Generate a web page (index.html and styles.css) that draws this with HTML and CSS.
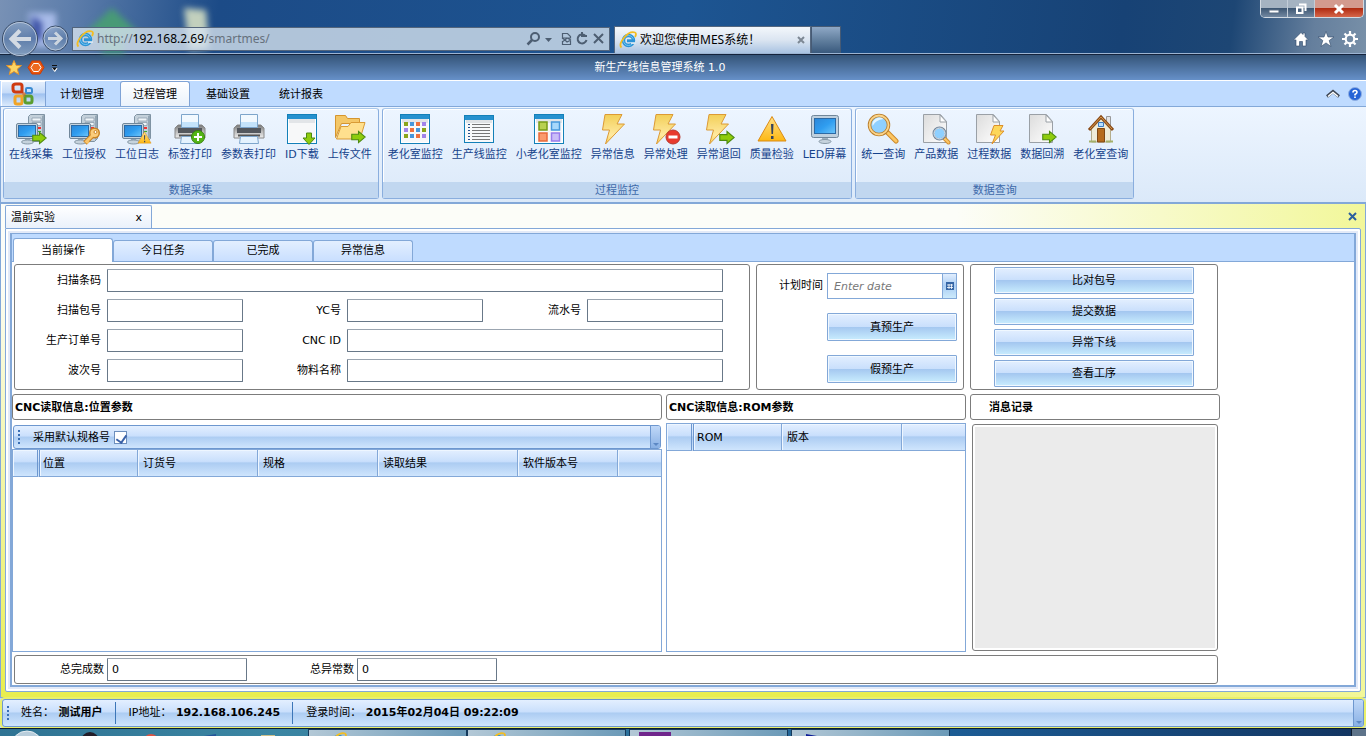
FILE: index.html
```html
<!DOCTYPE html>
<html lang="zh-CN">
  <head>
    <meta charset="UTF-8" />
    <title>欢迎您使用MES系统！</title>
    <link rel="stylesheet" href="styles.css">
  </head>
  <body>
    <!-- Icon sprites -->
    <svg class="sprites" aria-hidden="true">
      <defs>
        <linearGradient id="gScreen" x1="0" y1="0" x2="1" y2="1">
          <stop offset="0" stop-color="#2b86d8" /><stop offset="0.5" stop-color="#2f9df0" /><stop offset="1" stop-color="#6cc6fb" />
        </linearGradient>
        <linearGradient id="gGold" x1="0" y1="0" x2="0" y2="1">
          <stop offset="0" stop-color="#f2cf58" /><stop offset="0.7" stop-color="#ffe9a0" /><stop offset="1" stop-color="#f8cf4c" />
        </linearGradient>
        <linearGradient id="gWarn" x1="0" y1="0" x2="0" y2="1">
          <stop offset="0" stop-color="#ffe08a" /><stop offset="1" stop-color="#fdb813" />
        </linearGradient>
        <linearGradient id="gPaper" x1="0" y1="0" x2="1" y2="1">
          <stop offset="0" stop-color="#dcdcdc" /><stop offset="1" stop-color="#ffffff" />
        </linearGradient>
        <linearGradient id="gPrinter" x1="0" y1="0" x2="0" y2="1">
          <stop offset="0" stop-color="#777" /><stop offset="0.5" stop-color="#bbb" /><stop offset="1" stop-color="#eee" />
        </linearGradient>
        <linearGradient id="gCircle" x1="0" y1="0" x2="0" y2="1">
          <stop offset="0" stop-color="#8ca5c6" /><stop offset="0.5" stop-color="#5b7ba8" /><stop offset="1" stop-color="#8ba6c4" />
        </linearGradient>
      </defs>
      <symbol id="arrowGreen" viewBox="0 0 14 12">
        <path d="M.7 3.500h6.300V.8l6.300 5.200L7 11.200V8.500H.7z" fill="#8fcc0c" stroke="#4d8a10" />
      </symbol>
      <symbol id="pc" viewBox="0 0 32 32">
        <path d="M13.500 3.500l2-2h14v24l-3 3h-13z" fill="#c3d0da" stroke="#7f93a3" />
        <path d="M17 5h9v3h-9zM17 9.500h9v3h-9z" fill="#eef4f8" stroke="#8497a6" stroke-width=".7" />
        <path d="M27 3v24l2-2V2z" fill="#94a6b4" />
        <path d="M23 14h3v2h-3z" fill="#e33" /><path d="M23 18h3v1h-3z" fill="#3a3" />
        <rect x="1.500" y="10.500" width="21" height="15" rx="1.500" fill="#c6d4df" stroke="#71879a" />
        <rect x="3.500" y="12.500" width="17" height="11" fill="url(#gScreen)" stroke="#2c6aa5" />
        <path d="M10 26h5v2h-5z" fill="#95a8b6" /><ellipse cx="12.500" cy="29" rx="6" ry="2" fill="#c6d3dd" stroke="#8799a7" />
      </symbol>
      <symbol id="printer" viewBox="0 0 32 32">
        <path d="M4 12h24l3 3v10H1V15z" fill="url(#gPrinter)" stroke="#888" />
        <path d="M4 15h24v5H4z" fill="#53575d" />
        <path d="M7.500 1.500h17v13h-17z" fill="#f2f9ff" stroke="#7da5cb" />
        <path d="M8 9h16v5H8z" fill="#c4e3fb" />
        <path d="M5 21.500h22v2H5z" fill="#555" />
        <path d="M7.500 23.500h17l1 7h-19z" fill="#e4f2fe" stroke="#7da5cb" />
      </symbol>
      <symbol id="window" viewBox="0 0 32 32">
        <rect x="1.500" y="1.500" width="29" height="29" fill="#fff" stroke="#1380b8" />
        <path d="M2 2h28v4H2z" fill="#2591cf" /><path d="M3 6h26v8H3z" fill="#e2e5e8" /><path d="M3 10h26v19H3z" fill="#f7f8f9" />
      </symbol>
      <symbol id="bolt" viewBox="0 0 32 32">
        <path d="M8 1.500h17l-5 9.500h7.500L8.500 31l4-14H5.500z" fill="url(#gGold)" stroke="#dc9a35" stroke-linejoin="round" />
      </symbol>
      <symbol id="page" viewBox="0 0 32 32">
        <path d="M3.500 1.500h17l6 7v21h-23z" fill="url(#gPaper)" stroke="#9aa0a6" />
        <path d="M20 2v7h6.500z" fill="#fff" stroke="#9aa0a6" />
      </symbol>
      <symbol id="glass" viewBox="0 0 32 32">
        <path d="M20 19l9 9" stroke="#cc8a2c" stroke-width="5" stroke-linecap="round" />
        <path d="M21 20l8 8" stroke="#fcc663" stroke-width="3" stroke-linecap="round" />
        <circle cx="12" cy="12" r="9.500" fill="#8fd0ff" stroke="#b97d2a" stroke-width="3.500" />
        <circle cx="12" cy="12" r="9.500" fill="none" stroke="#fbd48a" stroke-width="1.800" />
        <path d="M5.500 13a7 7 0 0 1 11-7q-8 1-11 7z" fill="#e4f5ff" />
      </symbol>
      <symbol id="glassSmall" viewBox="0 0 19 19">
        <path d="M11.500 11.500l5 5" stroke="#d48f34" stroke-width="4" stroke-linecap="round" />
        <path d="M12.500 12.500l4 4" stroke="#fcc663" stroke-width="2" stroke-linecap="round" />
        <circle cx="7.500" cy="7.500" r="6" fill="#8fd0ff" stroke="#71859a" stroke-width="2" />
        <circle cx="7.500" cy="7.500" r="5.500" fill="none" stroke="#e8eef4" />
      </symbol>
      <symbol id="warn" viewBox="0 0 32 32">
        <path d="M16 3.500L30 28H2z" fill="url(#gWarn)" stroke="#db8b14" stroke-linejoin="round" />
        <path d="M15 11h2.500l-.5 10h-1.500zM15 23h2.500v3H15z" fill="#36435c" />
      </symbol>
      <symbol id="ie" viewBox="0 0 18 18">
        <circle cx="9.500" cy="9.500" r="5" fill="none" stroke="#2b93d6" stroke-width="3.400" />
        <circle cx="9.500" cy="9.500" r="5" fill="none" stroke="#72c6f2" stroke-width="1" />
        <path d="M8 8.300h8v2.900H8z" fill="#2b93d6" /><path d="M12 11.200h5v1.800h-5z" fill="#d6e6f2" />
        <path d="M2.500 16.500C-2 13 9-1 16 1.500c1.500.6 1 3 0 4.500" fill="none" stroke="#f3bd22" stroke-width="1.800" />
      </symbol>
    </svg>

    <!-- Browser frame -->
    <header class="browser">
      <svg class="backdrop" width="260" height="53" viewBox="0 0 260 53" aria-hidden="true">
        <path d="M112 8l30 28H82z" fill="#489a76" /><path d="M102 36h22v18h-22z" fill="#3d9272" />
        <path d="M184 8l22 2 3 38-20 2z" fill="#c2d0bd" /><path d="M28 13h28v34H34z" fill="#a9bce9" />
        <path d="M32 16l10 6v18H32z" fill="#3d52a6" />
      </svg>
      <div class="window-buttons">
        <button aria-label="最小化"><svg width="14" height="12"><path d="M2 7h10v3H2z" fill="#fff" stroke="#566b82" /></svg></button>
        <button aria-label="还原"><svg width="14" height="14"><path d="M5 2.500h6.500V9" fill="none" stroke="#fff" stroke-width="2" /><path d="M3 5.500h5.500v5.500H3z" fill="none" stroke="#fff" stroke-width="2" /></svg></button>
        <button class="close" aria-label="关闭"><svg width="14" height="12"><path d="M3 2l8 8M11 2l-8 8" stroke="#fff" stroke-width="3" /></svg></button>
      </div>
      <nav class="browser-bar">
        <button class="round back" aria-label="后退">
          <svg width="38" height="38" viewBox="0 0 38 38"><circle cx="19" cy="19" r="17.500" fill="url(#gCircle)" fill-opacity=".75" stroke="#394b66" /><circle cx="19" cy="19" r="16.500" fill="none" stroke="#b5c4d8" /><path d="M30 19H11M19 10.500L10.500 19l8.500 8.500" fill="none" stroke="#d3dae3" stroke-width="4" /></svg>
        </button>
        <button class="round" aria-label="前进">
          <svg width="27" height="27" viewBox="0 0 27 27"><circle cx="13.500" cy="13.500" r="12.500" fill="url(#gCircle)" fill-opacity=".75" stroke="#394b66" /><circle cx="13.500" cy="13.500" r="11.500" fill="none" stroke="#b5c4d8" /><path d="M6 13.500h12M13 7.500l6 6-6 6" fill="none" stroke="#ccd5df" stroke-width="3" /></svg>
        </button>
        <div class="address">
          <svg width="18" height="18"><use href="#ie" /></svg>
          <span class="url">http://<b>192.168.2.69</b>/smartmes/</span>
          <svg width="80" height="18" viewBox="0 0 80 18" fill="none" stroke="#4d5e72" stroke-width="2">
            <circle cx="9" cy="7" r="4" /><path d="M6 10l-4.500 4.500" stroke-width="2.500" />
            <path d="M19 8h7l-3.500 4z" fill="#4d5e72" stroke="none" />
            <path d="M36.500 8V3.500h5l3 3V8zM36.500 11v3.500h8V11M36 8l3 2 2-2 4 2M36 12l3-2 2 2 4-2" stroke-width="1.200" />
            <path d="M59 5.500a4.500 4.500 0 1 0 1.500 4.500M56 2v4h5" />
            <path d="M68 4l9 9M77 4l-9 9" />
          </svg>
        </div>
        <div class="browser-tab">
          <svg width="18" height="18"><use href="#ie" /></svg>
          <span>欢迎您使用MES系统！</span>
          <svg width="8" height="8"><path d="M1 1l6 6M7 1L1 7" stroke="#7d8894" stroke-width="2" /></svg>
        </div>
        <button class="new-tab" aria-label="新标签页"></button>
        <svg class="tools" width="66" height="18" viewBox="0 0 66 18" fill="#fff" stroke="#2f4868" stroke-width=".6">
          <path d="M1 9.500L8 2.500l2 2V3h2v3.500l3 3-1 .8-1-.5V16H9.500v-4.500h-3V16H3V9.800l-1 .5z" />
          <path d="M33 1.500l2 5.500h6l-4.800 3.500 1.800 6-5-3.600-5 3.600 1.800-6L25 7h6z" />
          <circle cx="57" cy="9" r="4.300" fill="none" stroke="#fff" stroke-width="2.200" />
          <path d="M57 1v3M57 14v3M49 9h3M62 9h3M51.500 3.500l2 2M60.500 12.500l2 2M62.500 3.500l-2 2M53.500 12.500l-2 2" stroke="#fff" stroke-width="2.200" />
        </svg>
      </nav>
    </header>

    <!-- Application title -->
    <div class="titlebar">
      <svg width="54" height="18" viewBox="0 0 54 18">
        <path d="M8 1.500l2.200 5h5.300l-4.200 3.600 1.500 5.400L8 12.500l-4.800 3 1.500-5.400L.5 6.500h5.300z" fill="#fcd462" stroke="#e2932c" />
        <path d="M26 2h8l4 6.500-4 6.500h-8l-4-6.500z" fill="#e9570f" stroke="#ce3c05" /><path d="M27.500 4.500h5L35 8.500l-2.500 4h-5l-2.500-4z" fill="#ee6a20" stroke="#fff" />
        <path d="M46 6.500h5M46.500 9.500h4.500l-2.200 3z" fill="#fff" stroke="#fff" /><path d="M46 6.500h5" stroke="#111" /><path d="M46 8.500h5l-2.500 3z" fill="#111" />
      </svg>
      <h1>新生产线信息管理系统 1.0</h1>
    </div>

    <nav class="menu">
      <button class="office" aria-label="主菜单">
        <svg width="24" height="24" viewBox="0 0 24 24" fill="none" stroke-width="3">
          <path d="M11 10H5q-3 0-3-3V4q0-2 3-2h4q2 0 2 2z" stroke="#cf3a10" />
          <path d="M15 10V7q0-1 1-1h3q2 0 2 2v2q0 1-2 1h-4z" stroke="#3b8bd0" stroke-width="2" />
          <path d="M11 14v6q0 2-2 2H6q-2 0-2-2v-4q0-2 2-2z" stroke="#f0a426" />
          <path d="M14 14h5q2 0 2 2v3q0 2-2 2h-3q-2 0-2-2z" stroke="#5b9e2f" />
          <path d="M11 12h4M13 10v5" stroke="#dc6a28" stroke-width="1" />
        </svg>
      </button>
      <button>计划管理</button>
      <button class="active">过程管理</button>
      <button>基础设置</button>
      <button>统计报表</button>
      <svg class="help" width="38" height="16" viewBox="0 0 38 16">
        <path d="M2 10.500l6-5 6 5" fill="none" stroke="#3d4654" stroke-width="3" /><path d="M3 10.500L8 6.500l5 4" fill="none" stroke="#fff" stroke-width="1.500" />
        <circle cx="30" cy="8" r="6.500" fill="#2563d6" stroke="#8eaee2" /><path d="M28 6.500q0-2 2-2t2 1.700q0 1-2 2.300v1M30 10.500v1.500" fill="none" stroke="#fff" stroke-width="1.600" />
      </svg>
    </nav>

    <section class="ribbon">
      <div class="group">
        <div class="group-items">
          <button><svg viewBox="0 0 32 32"><use href="#pc" /><use href="#arrowGreen" x="17" y="18" width="15" height="14" /></svg>在线采集</button>
          <button><svg viewBox="0 0 32 32"><use href="#pc" /><path d="M17 30l7-7" stroke="#c88222" stroke-width="5" /><circle cx="26.500" cy="20" r="4" fill="#fbcd7c" stroke="#c88222" stroke-width="3" /><path d="M17.500 29.500l7-7M20.500 30l-2-2" stroke="#f9c56c" stroke-width="3" /><circle cx="26.500" cy="20" r="4" fill="#fbcd7c" /><circle cx="27.500" cy="19" r="1.500" fill="#fff" stroke="#c88222" /></svg>工位授权</button>
          <button><svg viewBox="0 0 32 32"><use href="#pc" /><use href="#warn" x="16" y="17" width="15" height="15" /></svg>工位日志</button>
          <button><svg viewBox="0 0 32 32"><use href="#printer" /><circle cx="24" cy="24" r="6.500" fill="#54b516" stroke="#398210" /><path d="M24 20v8M20 24h8" stroke="#fff" stroke-width="2" /></svg>标签打印</button>
          <button><svg viewBox="0 0 32 32"><use href="#printer" /></svg>参数表打印</button>
          <button><svg viewBox="0 0 32 32"><use href="#window" /><path d="M20.500 20h5v5H29l-6 6.500-6-6.500h3.500z" fill="#8fcc0c" stroke="#4d8a10" /></svg>ID下载</button>
          <button><svg viewBox="0 0 32 32"><path d="M1.500 24.500v-22h10l2 3h12v5h-18z" fill="#f4c767" stroke="#d5952f" /><path d="M2.500 26L7 13.500h7l3-4h14L26 26z" fill="#ffe08e" stroke="#d99b36" /><use href="#arrowGreen" x="17" y="17" width="15" height="14" /></svg>上传文件</button>
        </div>
        <div class="caption">数据采集</div>
      </div>
      <div class="group">
        <div class="group-items">
          <button><svg viewBox="0 0 32 32"><use href="#window" /><g fill="#fff" stroke-width="2"><g stroke="#8aa61a"><path d="M6 10h2v2H6zM24 16h2v2h-2zM6 22h2v2H6z" /></g><g stroke="#4696dc"><path d="M12 10h2v2h-2zM18 16h2v2h-2zM12 22h2v2h-2z" /></g><g stroke="#f0703c"><path d="M18 10h2v2h-2zM12 16h2v2h-2zM18 22h2v2h-2z" /></g><g stroke="#a184ea"><path d="M24 10h2v2h-2zM6 16h2v2H6zM24 22h2v2h-2z" /></g></g></svg>老化室监控</button>
          <button><svg viewBox="0 0 32 32"><rect x="1.500" y="2.500" width="29" height="27" fill="#f8f9fa" stroke="#1380b8" /><path d="M2 3h28v4H2z" fill="#2591cf" /><path d="M3 7h26v3H3z" fill="#dfe2e5" /><path d="M9 11.500h18M9 14.500h18M9 17.500h18M9 20.500h18M9 23.500h18M9 26.500h18" stroke="#777" /><path d="M5 11.500h2M5 14.500h2M5 17.500h2M5 20.500h2M5 23.500h2M5 26.500h2" stroke="#234e8c" /></svg>生产线监控</button>
          <button><svg viewBox="0 0 32 32"><use href="#window" /><g stroke-width="1.500"><path d="M6 9h8v8H6z" fill="#b8d04f" stroke="#779a16" /><path d="M18.500 9h8v8h-8z" fill="#a7d8fb" stroke="#4698dc" /><path d="M6 20h8v8H6z" fill="#fa9a6c" stroke="#e96a3a" /><path d="M18.500 20h8v8h-8z" fill="#cabdf8" stroke="#9a7cec" /></g></svg>小老化室监控</button>
          <button><svg viewBox="0 0 32 32"><use href="#bolt" /></svg>异常信息</button>
          <button><svg viewBox="0 0 32 32"><use href="#bolt" x="-2" /><circle cx="23" cy="24" r="7" fill="#e83a2e" stroke="#b8392e" /><path d="M18.500 22.500h9v3h-9z" fill="#fff" /></svg>异常处理</button>
          <button><svg viewBox="0 0 32 32"><use href="#bolt" x="-2" /><use href="#arrowGreen" x="16" y="17" width="16" height="15" /></svg>异常退回</button>
          <button><svg viewBox="0 0 32 32"><use href="#warn" /></svg>质量检验</button>
          <button><svg viewBox="0 0 32 32"><rect x="2.500" y="2.500" width="27" height="22" rx="2" fill="#bfd0de" stroke="#71879a" /><rect x="5.500" y="5.500" width="21" height="15" fill="url(#gScreen)" stroke="#2c6aa5" /><path d="M13 25h6v3h-6z" fill="#9fb1bf" /><ellipse cx="16" cy="28.500" rx="6" ry="2" fill="#c6d3dd" stroke="#8799a7" /></svg>LED屏幕</button>
        </div>
        <div class="caption">过程监控</div>
      </div>
      <div class="group">
        <div class="group-items">
          <button><svg viewBox="0 0 32 32"><use href="#glass" /></svg>统一查询</button>
          <button><svg viewBox="0 0 32 32"><use href="#page" /><use href="#glassSmall" x="12" y="13" width="19" height="19" /></svg>产品数据</button>
          <button><svg viewBox="0 0 32 32"><use href="#page" /><path d="M21 12.500h9L27 18h4L19 31l3.500-9H17.500z" fill="#fdd75a" stroke="#dc8f2a" stroke-linejoin="round" /></svg>过程数据</button>
          <button><svg viewBox="0 0 32 32"><use href="#page" /><use href="#arrowGreen" x="16" y="17" width="15" height="14" /></svg>数据回溯</button>
          <button><svg viewBox="0 0 32 32"><path d="M21.500 3.500h4v12h-4z" fill="#e4e4e4" stroke="#999" /><path d="M6.500 16L16 6l9.500 10v13h-19z" fill="#efecd8" stroke="#b4ad8c" /><path d="M12.500 15.500h7V29h-7z" fill="#b66b1d" stroke="#7e4814" /><path d="M13.500 9.500h5v4h-5z" fill="#b9e0ff" stroke="#3c7dc4" /><path d="M4 17L16 4l12 13" fill="none" stroke="#8a4a16" stroke-width="3" /><path d="M5 16L16 4l11 12" fill="none" stroke="#d79a4e" /><path d="M4 29.500h7v-2H4zM21 29.500h7v-2h-7z" fill="#a4b06a" /></svg>老化室查询</button>
        </div>
        <div class="caption">数据查询</div>
      </div>
    </section>

    <main class="workspace">
      <div class="doc-tabs">
        <div class="doc-tab"><span>温前实验</span><button aria-label="关闭标签">x</button></div>
        <button class="close-all" aria-label="关闭"><svg width="9" height="9"><path d="M1 1l7 7M8 1L1 8" stroke="#2b5f9e" stroke-width="2" /></svg></button>
      </div>

      <div class="doc">
        <div class="doc-inner">
          <div class="tabs">
            <button class="active">当前操作</button>
            <button>今日任务</button>
            <button>已完成</button>
            <button>异常信息</button>
          </div>

          <div class="content">
            <div class="row top-row">
              <form class="panel scan-form">
                <label for="barcode">扫描条码</label><input id="barcode" class="full" type="text" />
                <label for="pack">扫描包号</label><input id="pack" type="text" />
                <label for="yc">YC号</label><input id="yc" type="text" />
                <label for="serial">流水号</label><input id="serial" type="text" />
                <label for="order">生产订单号</label><input id="order" type="text" />
                <label for="cnc">CNC ID</label><input id="cnc" class="wide" type="text" />
                <label for="wave">波次号</label><input id="wave" type="text" />
                <label for="material">物料名称</label><input id="material" class="wide" type="text" />
              </form>
              <div class="panel plan">
                <label for="planDate">计划时间</label>
                <div class="date">
                  <input id="planDate" type="text" placeholder="Enter date" />
                  <button aria-label="选择日期"><svg width="8" height="8"><path d="M0 0h8v8H0z" fill="#3565a5" /><path d="M1 3h6M1 5.500h6M3 2v5M5.500 2v5" stroke="#fff" stroke-width=".8" /></svg></button>
                </div>
                <button class="btn">真预生产</button>
                <button class="btn">假预生产</button>
              </div>
              <div class="panel actions">
                <button class="btn">比对包号</button>
                <button class="btn">提交数据</button>
                <button class="btn">异常下线</button>
                <button class="btn">查看工序</button>
              </div>
            </div>

            <div class="row heads">
              <h2 class="panel">CNC读取信息:位置参数</h2>
              <h2 class="panel">CNC读取信息:ROM参数</h2>
              <h2 class="panel log-title">消息记录</h2>
            </div>

            <div class="row grids">
              <div class="grid-left">
                <div class="toolbar">
                  <i class="grip"></i>
                  <label for="useDefault">采用默认规格号</label>
                  <input id="useDefault" type="checkbox" checked />
                  <span class="overflow"></span>
                </div>
                <div class="grid-box">
                  <table>
                    <colgroup><col class="c-mark" /><col class="c-pos" /><col class="c-120" /><col class="c-120" /><col class="c-result" /><col class="c-ver" /><col /></colgroup>
                    <thead><tr><th></th><th>位置</th><th>订货号</th><th>规格</th><th>读取结果</th><th>软件版本号</th><th></th></tr></thead>
                  </table>
                </div>
              </div>
              <div class="grid-box rom">
                <table>
                  <colgroup><col class="c-mark" /><col class="c-rom" /><col class="c-120" /><col /></colgroup>
                  <thead><tr><th></th><th>ROM</th><th>版本</th><th></th></tr></thead>
                </table>
              </div>
              <div class="panel log"></div>
            </div>

            <div class="panel totals">
              <label for="done">总完成数</label><input id="done" type="text" value="0" />
              <label for="bad">总异常数</label><input id="bad" type="text" value="0" />
            </div>
          </div>
        </div>
      </div>
    </main>

    <footer class="status">
      <i class="grip"></i>
      <span>姓名： <b>测试用户</b></span>
      <span>IP地址： <b>192.168.106.245</b></span>
      <span>登录时间： <b>2015年02月04日 09:22:09</b></span>
      <span class="overflow"></span>
    </footer>

    <!-- Top edge of the desktop taskbar -->
    <div class="taskbar">
      <svg class="pinned" width="308" height="8" viewBox="0 0 308 8">
        <circle cx="27" cy="18" r="16" fill="#b8cddb" stroke="#e5edf2" /><circle cx="90" cy="12" r="9" fill="#231d28" />
        <circle cx="151" cy="13" r="8" fill="#dc5444" /><path d="M198 8l18-3v3z" fill="#24549a" /><path d="M261 6h14v2h-14z" fill="#cfc08a" />
      </svg>
      <i class="task"><svg width="18" height="18"><use href="#ie" /></svg></i>
      <i class="task"><svg width="18" height="18"><use href="#ie" /></svg></i>
      <i class="task dark"><svg width="32" height="8"><path d="M0 2h32v6H0z" fill="#70268c" /></svg></i>
      <i class="task"><svg width="32" height="8"><path d="M0 4l22 4H0z" fill="#0c1c98" /></svg></i>
      <i class="desktop"></i>
    </div>
  </body>
</html>
```
FILE: styles.css
```css
* {
  box-sizing: border-box;
}

body {
  margin: 0;
  height: 100vh;
  display: flex;
  flex-direction: column;
  overflow: hidden;
  font-family: "DejaVu Sans", "Noto Sans CJK SC", sans-serif;
  font-size: 11px;
  line-height: 14px;
  color: #000;
  background: #bfdbff;
}

button,
input {
  font: inherit;
  color: inherit;
  margin: 0;
  padding: 0;
}

button {
  border: none;
  background: none;
}

svg {
  display: block;
  flex: none;
}

.sprites {
  position: absolute;
  width: 0;
  height: 0;
}

/* browser frame */
.browser {
  position: relative;
  flex: none;
  height: 55px;
  display: flex;
  flex-direction: column;
  justify-content: flex-end;
  border-bottom: 1px solid #14233c;
  box-shadow: inset 0 -1px #9cb4d2;
  background: linear-gradient(97deg, #7891b5 0, #5f7fac 5%, #1c4b87 16%, #1d5592 50%, #174275 82%, #1d4674 90%, #657f9d 96%, #7890a8 100%);
}

.backdrop {
  position: absolute;
  left: 0;
  top: 0;
  filter: blur(3px);
}

.window-buttons {
  position: absolute;
  right: 2px;
  top: 0;
  display: flex;
  height: 18px;
  border: 1px solid #d2dae2;
  border-top: none;
  border-radius: 0 0 5px 5px;
  overflow: hidden;
}

.window-buttons button {
  width: 27px;
  display: flex;
  align-items: center;
  justify-content: center;
  border-right: 1px solid #c3cdd8;
  background: linear-gradient(#a5b3c1 45%, #3f5874 50%, #7288a1);
}

.window-buttons .close {
  width: 48px;
  border: none;
  background: linear-gradient(#d39a8e 45%, #b02c12 50%, #d6664a);
}

.browser-bar {
  position: relative;
  display: flex;
  align-items: center;
  height: 31px;
  padding-left: 1px;
  font-family: "Noto Sans", "Noto Sans CJK SC", sans-serif;
  font-size: 12px;
}

.round {
  margin-right: 3px;
}

.address {
  flex: 0 1 538px;
  height: 24px;
  margin-right: 4px;
  padding: 0 3px;
  display: flex;
  align-items: center;
  gap: 3px;
  border: 1px solid #53657c;
  background: rgba(214, 226, 238, 0.8);
}

.url {
  flex: 1;
  color: #66717d;
}

.url b {
  font-weight: normal;
  color: #000;
}

.browser-tab {
  align-self: flex-end;
  flex: 0 1 197px;
  height: 27px;
  margin-bottom: 1px;
  padding: 0 5px 0 4px;
  display: flex;
  align-items: center;
  gap: 3px;
  border: 1px solid #54677f;
  border-bottom: none;
  background: linear-gradient(#f3f7fb, #dbe5f1 50%, #a9c3e2);
}

.browser-tab span {
  flex: 1;
  white-space: nowrap;
}

.new-tab {
  align-self: flex-end;
  width: 30px;
  height: 27px;
  margin-bottom: 1px;
  border: 1px solid #465a74;
  border-bottom: none;
  background: linear-gradient(#8fa8c6, #62809f 50%, #39597d);
}

.tools {
  margin-left: auto;
  margin-right: 7px;
}

/* application title and menu */
.titlebar {
  flex: none;
  display: flex;
  align-items: center;
  height: 25px;
  padding: 1px 106px 0 6px;
  background: linear-gradient(#345478, #6690c8);
}

.titlebar h1 {
  flex: 1;
  margin: 0;
  text-align: center;
  font-size: 11px;
  font-weight: normal;
  color: #fff;
}

.menu {
  flex: none;
  display: flex;
  align-items: flex-end;
  height: 27px;
  padding-left: 1px;
  border-top: 1px solid #fff;
  border-bottom: 1px solid #83a8d8;
  background: #bfdbff;
}

.menu button {
  height: 25px;
  width: 70px;
  margin-right: 3px;
  padding-top: 2px;
  border: 1px solid transparent;
  border-bottom: none;
}

.menu .office {
  width: 45px;
  margin-right: 1px;
  padding: 0 0 0 9px;
  border-color: #fff #7fa3d6 #fff #fff;
  background: linear-gradient(#e4effd, #c5dbf8 45%, #9fc2f0 50%, #dcebfc);
}

.menu .active {
  border-color: #7fa3d6;
  border-radius: 3px 3px 0 0;
  background: linear-gradient(#fff, #eaf2fc);
}

.help {
  margin: 0 3px 4px auto;
}

/* ribbon */
.ribbon {
  flex: none;
  display: flex;
  gap: 3px;
  padding: 1px 0 3px 2px;
  border-left: 1px solid #83a8d8;
  border-bottom: 2px solid #83a8d8;
  background: linear-gradient(#edf5ff, #dbe9f9);
}

.group {
  border: 1px solid #8aaede;
  border-top-color: #a9c8ec;
  border-radius: 3px;
  box-shadow: inset 1px 1px #fff;
}

.group-items {
  display: flex;
  gap: 1px;
  height: 73px;
  padding: 4px 1px 0;
}

.group:first-child .group-items {
  padding-right: 2px;
}

.group-items button {
  display: flex;
  flex-direction: column;
  align-items: center;
  justify-content: flex-start;
  gap: 3px;
  padding: 0 4px;
  white-space: nowrap;
  color: #15428b;
}

.group-items svg {
  width: 32px;
  height: 32px;
}

.caption {
  height: 16px;
  line-height: 17px;
  text-align: center;
  color: #3e6aaa;
  background: #c1d7f0;
}

/* workspace */
.workspace {
  flex: 1;
  min-height: 0;
  display: flex;
  flex-direction: column;
  padding: 1px 4px 5px;
  border: 1px solid #83a8d8;
  border-top: none;
  background: linear-gradient(to right, rgba(252, 253, 248, 0) 70%, #f2f79a 100%), linear-gradient(#fcfdf8 15%, #e9ee4e);
}

.doc-tabs {
  flex: none;
  display: flex;
  align-items: center;
  justify-content: space-between;
  height: 23px;
  padding-right: 4px;
}

.doc-tab {
  display: flex;
  justify-content: space-between;
  align-items: center;
  width: 147px;
  height: 23px;
  padding: 1px 9px 0 5px;
  border: 1px solid #83a8d8;
  border-bottom: none;
  border-radius: 2px 2px 0 0;
  background: linear-gradient(#fff, #eaf1fb);
}

.doc {
  flex: 1;
  min-height: 0;
  display: flex;
  padding: 2px;
  border: 1px solid #83a8d8;
  border-radius: 0 2px 2px 2px;
  background: #fff;
}

.doc-inner {
  flex: 1;
  min-width: 0;
  display: flex;
  flex-direction: column;
  border: 2px solid #83a8d8;
  border-top-width: 1px;
  box-shadow: 0 0 0 2px #e3eaf8;
  margin: 2px;
  background: #fff;
}

.tabs {
  flex: none;
  display: flex;
  align-items: flex-end;
  height: 28px;
  padding-left: 1px;
  border-bottom: 1px solid #83a8d8;
  background: #bfdbff;
}

.tabs button {
  width: 100px;
  height: 21px;
  border: 1px solid #83a8d8;
  border-bottom: none;
  border-radius: 3px 3px 0 0;
  background: linear-gradient(#e3efff, #c9dfff);
}

.tabs .active {
  height: 24px;
  margin-bottom: -1px;
  background: #fff;
}

.content {
  flex: 1;
  min-height: 0;
  display: flex;
  flex-direction: column;
  padding: 2px 134px 1px 0;
}

.row {
  display: grid;
  grid-template-columns: minmax(0, 650fr) minmax(0, 300fr) minmax(0, 250fr);
  gap: 4px;
}

.top-row {
  grid-template-columns: minmax(0, 736fr) minmax(0, 208fr) minmax(0, 248fr);
  gap: 6px;
  padding: 0 2px;
}

.panel {
  margin: 0;
  border: 1px solid #7c7c7c;
  border-radius: 3px;
}

input[type="text"] {
  width: 100%;
  min-width: 0;
  height: 23px;
  padding: 0 4px;
  border: 1px solid #687888;
  border-top-color: #9ba5b0;
  border-radius: 1px;
  background: #fff;
}

.scan-form {
  display: grid;
  grid-template-columns: 86px 1fr 92px 1fr 92px 1fr;
  gap: 7px 6px;
  align-items: center;
  padding: 4px 26px 7px 0;
}

.scan-form label {
  text-align: right;
}

.scan-form .full {
  grid-column: span 5;
}

.scan-form .wide {
  grid-column: span 3;
}

.plan {
  display: grid;
  grid-template-columns: 66px 1fr;
  column-gap: 4px;
  row-gap: 14px;
  align-items: center;
  align-content: start;
  padding: 8px 6px 0 0;
}

.plan label {
  text-align: right;
}

.plan .btn {
  grid-column: 2;
}

.date {
  display: flex;
  border: 1px solid #83a8d8;
}

.date input[type="text"] {
  flex: 1;
  height: 24px;
  padding: 0 6px;
  border: none;
}

.date input::placeholder {
  font-style: italic;
  color: #777;
}

.date button {
  width: 14px;
  display: flex;
  align-items: center;
  justify-content: center;
  border-left: 1px solid #83a8d8;
  background: linear-gradient(#e1eefe, #a9ccf3 50%, #cdeafb);
}

.btn {
  height: 28px;
  padding-top: 1px;
  border: 1px solid #83a8d8;
  border-radius: 1px;
  box-shadow: inset 0 0 0 1px #f0f8ff;
  background: linear-gradient(#e3efff, #c9dffc 49%, #a4c7f0 50%, #c9edfe);
}

.actions {
  display: flex;
  flex-direction: column;
  gap: 4px;
  padding: 2px 23px;
}

.actions .btn {
  height: 27px;
}

.heads {
  margin-top: 4px;
}

.heads h2 {
  height: 26px;
  padding: 1px 2px 0;
  line-height: 24px;
  font-size: 11px;
}

.heads .log-title {
  padding-left: 18px;
}

/* grids */
.grids {
  flex: 1;
  min-height: 0;
  margin-top: 3px;
}

.grid-left {
  display: flex;
  flex-direction: column;
  padding-top: 2px;
}

.toolbar,
.status {
  display: flex;
  align-items: center;
  border: 1px solid #6d97cf;
  border-radius: 3px;
  background: linear-gradient(#e3efff, #c9dffc 46%, #acccf2 50%, #cfe5fd);
}

.toolbar {
  flex: none;
  height: 24px;
  margin: 0 1px;
}

.toolbar label {
  padding-top: 1px;
}

.grip {
  width: 2px;
  height: 14px;
  margin: 0 13px 0 4px;
  background: repeating-linear-gradient(#3a6fb5 0 2px, transparent 2px 4px);
}

.toolbar input {
  appearance: none;
  width: 13px;
  height: 13px;
  margin-left: 4px;
  border: 1px solid #6d8fbd;
  background: #fff;
  position: relative;
}

.toolbar input:checked::after {
  content: "";
  position: absolute;
  left: 3px;
  top: 1px;
  width: 5px;
  height: 8px;
  border: solid #3a62a8;
  border-width: 0 2px 2px 0;
  transform: rotate(35deg);
}

.overflow {
  position: relative;
  align-self: stretch;
  width: 10px;
  margin-left: auto;
  border-left: 1px solid #6d97cf;
  border-radius: 0 2px 2px 0;
  background: linear-gradient(#c0d8f8, #88b0e4);
}

.overflow::after {
  content: "";
  position: absolute;
  left: 2px;
  bottom: 2px;
  border: 3px solid transparent;
  border-top-color: #5c88c4;
  border-bottom: none;
}

.grid-box {
  flex: 1;
  border: 1px solid #83a8d8;
  background: #fff;
}

table {
  width: 100%;
  table-layout: fixed;
  border-collapse: separate;
  border-spacing: 0;
}

th {
  height: 27px;
  padding: 2px 0 0 5px;
  text-align: left;
  font-weight: normal;
  border-right: 1px solid #83a8d8;
  border-bottom: 1px solid #83a8d8;
  box-shadow: inset 1px 1px #eef6ff;
  background: linear-gradient(#e3efff, #c9dffc 44%, #acccf2 50%, #cfe5fd);
}

th:first-child {
  border-right: 3px double #6d97cf;
}

th:nth-child(2) {
  padding-left: 3px;
}

th:last-child {
  border-right: none;
}

.c-mark { width: 27px; }
.c-pos { width: 98px; }
.c-rom { width: 88px; }
.c-120 { width: 120px; }
.c-result { width: 140px; }
.c-ver { width: 100px; }

.log {
  margin: 1px 2px 1px 2px;
  padding: 2px;
  background: #ebebeb content-box;
}

.totals {
  flex: none;
  display: flex;
  align-items: center;
  height: 29px;
  margin: 3px 2px 0;
}

.totals label {
  width: 89px;
  text-align: right;
}

.totals input[type="text"] {
  width: 140px;
  margin-left: 3px;
}

.totals input + label {
  width: 107px;
}

/* status bar */
.status {
  flex: none;
  height: 28px;
  margin: 1px 2px;
  box-shadow: 0 0 0 2px #e9ef6a;
}

.status span:not(.overflow) {
  padding: 4px 12px 4px 13px;
  border-right: 1px solid #3c76b8;
}

.status b {
  margin-left: 1px;
}

.status .grip {
  margin-right: 12px;
}

.status .grip + span:not(.overflow) {
  padding-left: 0;
}

.status span:nth-of-type(3) {
  border-right: none;
}

/* taskbar */
.taskbar {
  flex: none;
  display: flex;
  height: 8px;
  overflow: hidden;
  border-top: 1px solid #0b1c30;
  background: linear-gradient(to right, #2f7393, #3b86a3 20%, #1c5c94 70%, #123460);
}

.task {
  flex: 0 1 159px;
  height: 8px;
  padding: 2px 0 0 20px;
  border: 1px solid #153a5c;
  border-bottom: none;
  background: linear-gradient(to right, #b3c8d6, #6b9ab8);
}

.task.dark {
  margin: 0 3px;
  padding: 0 0 0 9px;
}

.task:nth-of-type(4) {
  padding: 0 0 0 14px;
}

.desktop {
  width: 15px;
  margin-left: auto;
  border-left: 1px solid #0b1c30;
  background: #5d7389;
}
```
